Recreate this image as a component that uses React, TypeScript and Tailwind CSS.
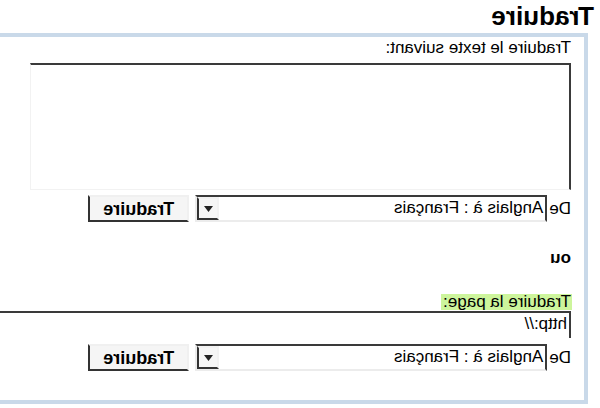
export default function App() {
  const font = { fontFamily: '"Liberation Sans", Arial, sans-serif' };

  const LangRow = () => (
    <div className="flex items-center h-[27px]">
      <span className="text-[17px] leading-[20px] mr-[2px] text-black">De</span>
      <div className="flex h-[27px] w-[352px] border-2 border-t-[#3a3a3a] border-l-[#3a3a3a] border-r-[#ececec] border-b-[#ececec] bg-white">
        <span className="flex-1 pl-[2px] text-[17px] leading-[22px] text-black">Anglais à : Français</span>
        <div className="flex w-[22px] items-center justify-center border-2 border-t-[#f2f2f2] border-l-[#f2f2f2] border-r-[#333] border-b-[#333] bg-[#f6f6f6]">
          <svg width="9" height="6" viewBox="0 0 9 6">
            <path d="M0 0h9L4.5 6z" fill="#222" />
          </svg>
        </div>
      </div>
      <button className="ml-[6px] h-[27px] w-[101px] border-2 border-t-[#f0f0f0] border-l-[#f0f0f0] border-r-[#333] border-b-[#333] bg-[#f5f5f5] text-[18px] font-bold leading-[20px] text-black">
        Traduire
      </button>
    </div>
  );

  return (
    <div className="h-[408px] w-[600px] overflow-hidden bg-white -scale-x-100" style={font}>
      <h1 className="pl-[6px] pt-[1px] text-[26px] font-bold leading-[30px] text-black">Traduire</h1>
      <div className="ml-[12px] mt-[2px] h-[371px] w-[620px] border-4 border-[#c9d9e9] bg-white pl-[13px] pt-[1px]">
        <div className="text-[17px] leading-[20px] text-black">Traduire le texte suivant:</div>
        <div className="mt-[5px] h-[127px] w-[541px] border-t-2 border-l-2 border-r border-b border-t-[#3a3a3a] border-l-[#3a3a3a] border-r-[#f2f2f2] border-b-[#f2f2f2]" />
        <div className="mt-[5px]">
          <LangRow />
        </div>
        <div className="mt-[26px] text-[17px] font-bold leading-[20px] text-black">ou</div>
        <div className="mt-[26px] flex">
          <span className="-ml-[1px] h-[16px] bg-[#cdf59c] pl-[1px] pr-[2px] text-[17px] leading-[16px] text-black">Traduire la page:</span>
        </div>
        <div className="mt-[1px] h-[27px] w-[600px] border-t-2 border-l-2 border-t-[#3a3a3a] border-l-[#3a3a3a] pl-[2px] text-[17px] leading-[22px] text-black">
          http://
        </div>
        <div className="mt-[6px]">
          <LangRow />
        </div>
      </div>
    </div>
  );
}
